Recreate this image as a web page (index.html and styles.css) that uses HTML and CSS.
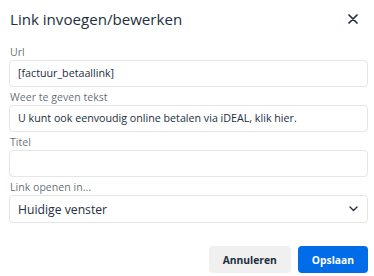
FILE: index.html
```html
<!DOCTYPE html>
<html lang="nl">
<head>
<meta charset="utf-8">
<title>Link invoegen/bewerken</title>
<link rel="stylesheet" href="styles.css">
</head>
<body>
<div class="dialog">
  <div class="header">
    <div class="title">Link invoegen/bewerken</div>
    <button class="close" aria-label="Sluiten">
      <svg width="10" height="10" viewBox="0 0 10 10"><path d="M1 1 L9 9 M9 1 L1 9" stroke="#222f3e" stroke-width="1.7" stroke-linecap="round" fill="none"/></svg>
    </button>
  </div>
  <div class="form">
    <div class="field">
      <label class="label">Url</label>
      <div class="input">[factuur_betaallink]</div>
    </div>
    <div class="field">
      <label class="label">Weer te geven tekst</label>
      <div class="input">U kunt ook eenvoudig online betalen via iDEAL, klik hier.</div>
    </div>
    <div class="field">
      <label class="label">Titel</label>
      <div class="input"></div>
    </div>
    <div class="field">
      <label class="label">Link openen in...</label>
      <div class="select"><span>Huidige venster</span>
        <svg width="9" height="6" viewBox="0 0 9 6"><path d="M1 1 L4.5 4.5 L8 1" stroke="#222f3e" stroke-width="1.4" fill="none" stroke-linecap="round" stroke-linejoin="round"/></svg>
      </div>
    </div>
  </div>
  <div class="footer">
    <button class="btn btn-secondary">Annuleren</button>
    <button class="btn btn-primary">Opslaan</button>
  </div>
</div>
</body>
</html>
```
FILE: styles.css
```css
html, body {
  margin: 0;
  padding: 0;
  background: #fff;
}
body {
  font-family: "Open Sans", "Noto Sans", sans-serif;
  color: #222f3e;
}
.dialog {
  width: 374px;
  height: 276px;
  box-sizing: border-box;
  padding: 7px 6px 0 9px;
  display: flex;
  flex-direction: column;
}
.header {
  display: flex;
  align-items: center;
  justify-content: space-between;
  height: 24px;
  padding: 0 10px 0 1px;
}
.title {
  font-size: 15.1px;
  line-height: 24px;
  color: #222f3e;
}
.close {
  border: 0;
  background: none;
  padding: 0;
  width: 10px;
  height: 10px;
  display: flex;
}
.form {
  display: flex;
  flex-direction: column;
  gap: 3px;
  margin-top: 14px;
}
.field {
  display: flex;
  flex-direction: column;
}
.label {
  font-size: 10.6px;
  line-height: 15px;
  color: rgba(34, 47, 62, 0.72);
  padding-left: 1px;
}
.input, .select {
  height: 27px;
  box-sizing: border-box;
  border: 1px solid #e6e6e6;
  border-radius: 4px;
  padding: 0 8px;
  font-size: 10.7px;
  line-height: 25px;
  color: #222f3e;
  white-space: nowrap;
  overflow: hidden;
  box-shadow: 0 0 1px rgba(0, 0, 0, 0.05);
}
.select {
  height: 28px;
  font-size: 12.2px;
  display: flex;
  align-items: center;
  justify-content: space-between;
  padding: 0 9px 0 8px;
}
.footer {
  display: flex;
  justify-content: flex-end;
  gap: 7px;
  margin-top: 23px;
}
.btn {
  height: 27px;
  border: 0;
  border-radius: 4px;
  font-family: inherit;
  font-weight: 700;
  font-size: 10.3px;
  padding: 0 14px;
}
.btn-secondary {
  background: #f0f0f0;
  color: #222f3e;
}
.btn-primary {
  background: #006ce7;
  color: #fff;
}
```
